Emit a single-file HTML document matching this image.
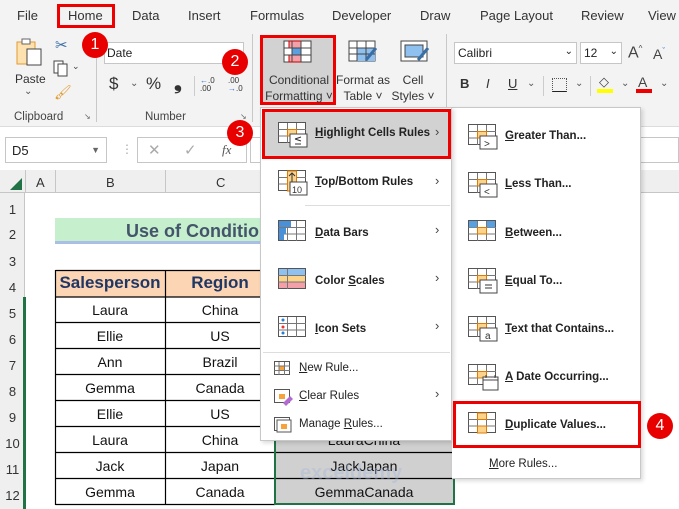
<!DOCTYPE html>
<html><head><meta charset="utf-8"><style>
*{margin:0;padding:0;box-sizing:border-box}
body{width:679px;height:509px;overflow:hidden;position:relative;background:#fff;font-family:"Liberation Sans",sans-serif;color:#222}
.a{position:absolute}
.t{font-size:13px;color:#333;top:8px}
.badge{position:absolute;width:26px;height:26px;border-radius:50%;background:#e80000;color:#fff;font-size:16px;text-align:center;line-height:26px}
.rl{font-size:11.5px;color:#444;top:111px}
.cell{position:absolute;font-size:14px;text-align:center;color:#111}
.rh{position:absolute;left:0;width:25px;font-size:13px;color:#333;text-align:center}
.mi{position:absolute;font-size:11.5px;font-weight:bold;color:#222;white-space:nowrap}
.mi u{text-decoration:underline}
.chev{position:absolute;font-size:13px;color:#444}
</style></head><body>
<div class="a" style="left:0;top:0;width:679px;height:127px;background:#f3f3f3;border-bottom:1px solid #dcdcdc"></div>
<div class="a t" style="left:17px">File</div>
<div class="a t" style="left:68px">Home</div>
<div class="a" style="left:57px;top:4px;width:58px;height:24px;border:3px solid #e00"></div>
<div class="a t" style="left:132px">Data</div>
<div class="a t" style="left:188px">Insert</div>
<div class="a t" style="left:250px">Formulas</div>
<div class="a t" style="left:332px">Developer</div>
<div class="a t" style="left:420px">Draw</div>
<div class="a t" style="left:480px">Page Layout</div>
<div class="a t" style="left:581px">Review</div>
<div class="a t" style="left:648px">View</div>
<svg class="a" style="left:15px;top:36px" width="32" height="30"><rect x="2" y="6" width="18" height="22" fill="#fde2b0" stroke="#e29a2f"/><rect x="7" y="3" width="8" height="5" fill="#fff" stroke="#666"/><rect x="12" y="13" width="14" height="16" fill="#fff" stroke="#444"/></svg>
<div class="a" style="left:15px;top:72px;font-size:12px;color:#333">Paste</div>
<div class="a" style="left:24px;top:86px;font-size:10px;color:#555">⌄</div>
<div class="a" style="left:55px;top:36px;font-size:15px;color:#3a6ea5">✂</div>
<svg class="a" style="left:53px;top:60px" width="28" height="18"><rect x="1" y="1" width="9" height="12" fill="#fff" stroke="#444"/><rect x="5" y="4" width="9" height="12" fill="#fff" stroke="#444"/><text x="19" y="9" font-size="9" fill="#444">⌄</text></svg>
<div class="a" style="left:54px;top:84px;font-size:14px;color:#e29a2f">🖌</div>
<div class="a rl" style="left:14px">Clipboard</div>
<div class="a" style="left:84px;top:112px;font-size:8px;color:#666">↘</div>
<div class="a" style="left:96px;top:34px;width:1px;height:88px;background:#c8c8c8"></div>
<div class="a" style="left:104px;top:42px;width:140px;height:22px;background:#fff;border:1px solid #c6c6c6;font-size:12px;padding:3px 2px;color:#222">Date</div>
<div class="a" style="left:109px;top:74px;font-size:17px;color:#333">$</div>
<div class="a" style="left:130px;top:78px;font-size:10px;color:#555">⌄</div>
<div class="a" style="left:146px;top:74px;font-size:17px;color:#333">%</div>
<div class="a" style="left:174px;top:72px;font-size:20px;font-weight:bold;color:#333">❟</div>
<div class="a" style="left:194px;top:76px;width:1px;height:20px;background:#ccc"></div>
<div class="a" style="left:200px;top:77px;font-size:8px;line-height:8px;color:#333"><span style="color:#2a7bd3">←</span>.0<br>.00</div>
<div class="a" style="left:228px;top:77px;font-size:8px;line-height:8px;color:#333">.00<br><span style="color:#2a7bd3">→</span>.0</div>
<div class="a rl" style="left:145px">Number</div>
<div class="a" style="left:240px;top:112px;font-size:8px;color:#666">↘</div>
<div class="a" style="left:252px;top:34px;width:1px;height:88px;background:#c8c8c8"></div>
<div class="a" style="left:260px;top:35px;width:76px;height:70px;background:#d2d2d2;border:3px solid #e00"></div>
<svg class="a" style="left:283px;top:40px" width="30" height="24"><rect x="1" y="1" width="27" height="21" fill="#fff" stroke="#444"/><rect x="6" y="1" width="12" height="7" fill="#f4a0a8" stroke="#c00"/><rect x="9" y="8" width="9" height="7" fill="#5aa0e0"/><rect x="6" y="15" width="12" height="7" fill="#f4a0a8" stroke="#c00"/><path d="M1 8H28M1 15H28M9 1V22M18 1V22" stroke="#444" fill="none"/></svg>
<div class="a" style="left:263px;top:72px;font-size:12px;color:#333;width:72px;text-align:center;line-height:16px">Conditional<br>Formatting ˅</div>
<svg class="a" style="left:348px;top:40px" width="30" height="26"><rect x="1" y="1" width="26" height="20" fill="#fff" stroke="#444"/><rect x="9" y="8" width="18" height="13" fill="#8ec1f0"/><path d="M1 8H27M1 14H27M9 1V21M18 1V21" stroke="#444" fill="none"/><path d="M28 8L18 20" stroke="#3a6ea5" stroke-width="3"/></svg>
<div class="a" style="left:336px;top:72px;font-size:12px;color:#333;width:54px;text-align:center;line-height:16px">Format as<br>Table ˅</div>
<svg class="a" style="left:400px;top:40px" width="30" height="26"><rect x="1" y="1" width="26" height="20" fill="#fff" stroke="#444"/><rect x="5" y="5" width="18" height="12" fill="#8ec1f0" stroke="#444"/><path d="M28 8L18 20" stroke="#3a6ea5" stroke-width="3"/></svg>
<div class="a" style="left:390px;top:72px;font-size:12px;color:#333;width:46px;text-align:center;line-height:16px">Cell<br>Styles ˅</div>
<div class="a" style="left:446px;top:34px;width:1px;height:88px;background:#c8c8c8"></div>
<div class="a" style="left:454px;top:42px;width:123px;height:22px;background:#fff;border:1px solid #c6c6c6;font-size:12px;padding:3px 3px;color:#222">Calibri<span style="float:right;font-size:10px">⌄</span></div>
<div class="a" style="left:580px;top:42px;width:42px;height:22px;background:#fff;border:1px solid #c6c6c6;font-size:12px;padding:3px 3px;color:#222">12<span style="float:right;font-size:10px">⌄</span></div>
<div class="a" style="left:628px;top:44px;font-size:16px;color:#444">A<sup style="font-size:8px">^</sup></div>
<div class="a" style="left:653px;top:46px;font-size:14px;color:#444">A<sup style="font-size:8px;color:#2a7bd3">ˇ</sup></div>
<div class="a" style="left:460px;top:76px;font-size:13px;font-weight:bold;color:#333">B</div>
<div class="a" style="left:486px;top:76px;font-size:13px;font-style:italic;color:#333">I</div>
<div class="a" style="left:508px;top:76px;font-size:13px;text-decoration:underline;color:#333">U</div>
<div class="a" style="left:527px;top:78px;font-size:10px;color:#555">⌄</div>
<div class="a" style="left:543px;top:76px;width:1px;height:20px;background:#ccc"></div>
<div class="a" style="left:552px;top:78px;width:15px;height:14px;border:1px dotted #555;border-bottom:1px solid #222"></div>
<div class="a" style="left:575px;top:78px;font-size:10px;color:#555">⌄</div>
<div class="a" style="left:590px;top:76px;width:1px;height:20px;background:#ccc"></div>
<div class="a" style="left:599px;top:74px;font-size:13px;color:#444">◇</div>
<div class="a" style="left:597px;top:89px;width:16px;height:4px;background:#ff0"></div>
<div class="a" style="left:621px;top:78px;font-size:10px;color:#555">⌄</div>
<div class="a" style="left:638px;top:74px;font-size:14px;color:#444">A</div>
<div class="a" style="left:636px;top:89px;width:16px;height:4px;background:#e00"></div>
<div class="a" style="left:660px;top:78px;font-size:10px;color:#555">⌄</div>
<div class="a" style="left:5px;top:137px;width:102px;height:26px;border:1px solid #c6c6c6;font-size:13px;padding:5px 6px;color:#222">D5<span style="float:right;font-size:9px;color:#666;margin-top:2px">▼</span></div>
<div class="a" style="left:121px;top:142px;font-size:12px;color:#aaa">⋮</div>
<div class="a" style="left:137px;top:137px;width:110px;height:26px;border:1px solid #c6c6c6"></div>
<div class="a" style="left:148px;top:141px;font-size:15px;color:#aaa">✕</div>
<div class="a" style="left:184px;top:141px;font-size:15px;color:#aaa">✓</div>
<div class="a" style="left:222px;top:142px;font-size:13px;font-style:italic;color:#555;font-family:'Liberation Serif',serif">fx</div>
<div class="a" style="left:250px;top:137px;width:429px;height:26px;border:1px solid #c6c6c6"></div>
<div class="a" style="left:0;top:170px;width:679px;height:23px;background:#efefef;border-bottom:1px solid #c6c6c6"></div>
<svg class="a" style="left:10px;top:178px" width="13" height="13"><path d="M12 0V12H0Z" fill="#217346"/></svg>
<div class="a" style="left:25px;top:170px;width:1px;height:23px;background:#c6c6c6"></div>
<div class="a" style="left:55px;top:170px;width:1px;height:23px;background:#c6c6c6"></div>
<div class="a" style="left:165px;top:170px;width:1px;height:23px;background:#c6c6c6"></div>
<div class="a" style="left:36px;top:175px;font-size:13px;color:#333">A</div>
<div class="a" style="left:106px;top:175px;font-size:13px;color:#333">B</div>
<div class="a" style="left:216px;top:175px;font-size:13px;color:#333">C</div>
<div class="a" style="left:0;top:193px;width:25px;height:316px;background:#efefef;border-right:1px solid #c6c6c6"></div>
<div class="a" style="left:23px;top:297px;width:3px;height:212px;background:#217346"></div>
<div class="rh" style="top:202px">1</div><div class="rh" style="top:227px">2</div><div class="rh" style="top:254px">3</div><div class="rh" style="top:280px">4</div><div class="rh" style="top:306px">5</div><div class="rh" style="top:332px">6</div><div class="rh" style="top:358px">7</div><div class="rh" style="top:384px">8</div><div class="rh" style="top:410px">9</div><div class="rh" style="top:436px">10</div><div class="rh" style="top:462px">11</div><div class="rh" style="top:488px">12</div>
<div class="a" style="left:55px;top:218px;width:220px;height:26px;background:#c6efce;border-bottom:3px solid #a9bfe6"></div>
<div class="a" style="left:126px;top:221px;font-size:18px;font-weight:bold;color:#44546a">Use of Conditio</div>
<div class="a" style="left:55px;top:270px;width:220px;height:27px;background:#fcd5b4"></div>
<div class="a" style="left:274px;top:297px;width:180px;height:208px;background:#fff"></div>
<div class="a" style="left:274px;top:426px;width:180px;height:78px;background:#d0d0d0"></div>
<svg class="a" style="left:0;top:0" width="679" height="509"><g stroke="#000" stroke-width="1.2"><path d="M55.5 270.5H275M55.5 297H275M55.5 322.5H275M55.5 348.5H275M55.5 374.5H275M55.5 400.5H275M55.5 426.5H275M55.5 452.5H275M55.5 478.5H275M55.5 504.5H275M55.5 270V505M165.5 270V505M275 452.5H454M275 478.5H454"/></g></svg>
<div class="a" style="left:274px;top:297px;width:181px;height:208px;border:2px solid #217346"></div>
<div class="cell" style="left:55px;top:273px;width:110px;font-size:17px;font-weight:bold;color:#203764">Salesperson</div>
<div class="cell" style="left:165px;top:273px;width:110px;font-size:17px;font-weight:bold;color:#203764">Region</div>
<div class="cell" style="left:55px;top:302px;width:110px">Laura</div><div class="cell" style="left:165px;top:302px;width:110px">China</div>
<div class="cell" style="left:55px;top:328px;width:110px">Ellie</div><div class="cell" style="left:165px;top:328px;width:110px">US</div>
<div class="cell" style="left:55px;top:354px;width:110px">Ann</div><div class="cell" style="left:165px;top:354px;width:110px">Brazil</div>
<div class="cell" style="left:55px;top:380px;width:110px">Gemma</div><div class="cell" style="left:165px;top:380px;width:110px">Canada</div>
<div class="cell" style="left:55px;top:406px;width:110px">Ellie</div><div class="cell" style="left:165px;top:406px;width:110px">US</div>
<div class="cell" style="left:55px;top:432px;width:110px">Laura</div><div class="cell" style="left:165px;top:432px;width:110px">China</div>
<div class="cell" style="left:55px;top:458px;width:110px">Jack</div><div class="cell" style="left:165px;top:458px;width:110px">Japan</div>
<div class="cell" style="left:55px;top:484px;width:110px">Gemma</div><div class="cell" style="left:165px;top:484px;width:110px">Canada</div>
<div class="cell" style="left:274px;top:432px;width:180px">LauraChina</div>
<div class="cell" style="left:274px;top:458px;width:180px">JackJapan</div>
<div class="cell" style="left:274px;top:484px;width:180px">GemmaCanada</div>
<div class="a" style="left:300px;top:462px;font-size:20px;font-weight:bold;color:#a8b8d8;opacity:.4">exceldemy</div>
<!-- submenu bg -->
<div class="a" style="left:452px;top:107px;width:189px;height:372px;background:#fff;border:1px solid #c8c8c8;border-left:none;box-shadow:2px 2px 4px rgba(0,0,0,.15)"></div>
<!-- menu 1 -->
<div class="a" style="left:260px;top:107px;width:192px;height:334px;background:#fff;border:1px solid #c8c8c8;box-shadow:2px 2px 4px rgba(0,0,0,.15)"></div>
<div class="a" style="left:262px;top:109px;width:189px;height:50px;background:#d2d2d2;border:3px solid #e00"></div>
<div class="a" style="left:305px;top:205px;width:145px;height:1px;background:#ddd"></div>
<div class="a" style="left:263px;top:352px;width:187px;height:1px;background:#ddd"></div>
<svg class="a" style="left:0;top:0" width="679" height="509" fill="none">
<defs><g id="g"><rect x=".5" y=".5" width="27" height="20" fill="#fff" stroke="#555"/><path d="M.5 7.5H28M.5 14H28M9.5 1V21M18.5 1V21" stroke="#777"/></g></defs>
<g transform="translate(278,122)"><use href="#g"/><rect x="9.5" y="7.5" width="9" height="6.5" fill="#fbd38b" stroke="#e07b00"/><rect x="12" y="12" width="17" height="13" fill="#fff" stroke="#444"/><path d="M17 17L23 15M17 17L23 19M17 22H23" stroke="#333"/></g>
<g transform="translate(278,170)"><use href="#g"/><rect x="9.5" y="1" width="9" height="20" fill="#fbd38b" stroke="#e07b00"/><path d="M14 12V3M11 6L14 3L17 6" stroke="#333"/><rect x="12" y="12" width="17" height="13" fill="#fff" stroke="#444"/><text x="14" y="23" font-size="9" fill="#333">10</text></g>
<g transform="translate(278,220)"><use href="#g"/><rect x="1" y="1" width="12" height="6" fill="#4a90d9"/><rect x="1" y="8" width="7" height="6" fill="#4a90d9"/><rect x="1" y="14" width="5" height="6" fill="#4a90d9"/></g>
<g transform="translate(278,268)"><rect x=".5" y=".5" width="27" height="20" fill="#fff" stroke="#555"/><rect x="1" y="1" width="26" height="6" fill="#8ec1f0"/><rect x="1" y="8" width="26" height="6" fill="#fbd38b"/><rect x="1" y="14" width="26" height="6" fill="#f4a0a8"/><path d="M.5 7.5H28M.5 14H28M9.5 1V21" stroke="#777"/></g>
<g transform="translate(278,316)"><use href="#g"/><circle cx="5" cy="4" r="1.5" fill="#2a7bd3"/><circle cx="5" cy="11" r="1.5" fill="#e33"/><circle cx="5" cy="17" r="1.5" fill="#2a7bd3"/></g>
<g transform="translate(274,361)"><rect x=".5" y=".5" width="15" height="13" fill="#fff" stroke="#555"/><rect x="5" y="5" width="6" height="5" fill="#f7a23b"/><path d="M.5 5H16M.5 9.5H16M5 1V14M10.5 1V14" stroke="#777"/></g>
<g transform="translate(274,389)"><rect x=".5" y=".5" width="15" height="13" fill="#fff" stroke="#555"/><rect x="5" y="5" width="6" height="5" fill="#f7a23b"/><path d="M9 14L16 7L19 10L12 17Z" fill="#b36ad1"/></g>
<g transform="translate(274,417)"><rect x=".5" y=".5" width="15" height="13" fill="#fff" stroke="#555"/><rect x="3" y="3" width="14" height="12" fill="#fff" stroke="#555"/><rect x="7" y="7" width="6" height="5" fill="#f7a23b"/></g>
<g transform="translate(468,124)"><use href="#g"/><rect x="9.5" y="7.5" width="9" height="6.5" fill="#fbd38b" stroke="#e07b00"/><rect x="12" y="12" width="17" height="13" fill="#fff" stroke="#444"/><text x="16" y="23" font-size="10" fill="#333">&gt;</text></g>
<g transform="translate(468,172)"><use href="#g"/><rect x="9.5" y="7.5" width="9" height="6.5" fill="#fbd38b" stroke="#e07b00"/><rect x="12" y="12" width="17" height="13" fill="#fff" stroke="#444"/><text x="16" y="23" font-size="10" fill="#333">&lt;</text></g>
<g transform="translate(468,220)"><use href="#g"/><rect x="1" y="1" width="8" height="6.5" fill="#5aa0e0"/><rect x="19" y="1" width="8" height="6.5" fill="#5aa0e0"/><rect x="9.5" y="7.5" width="9" height="6.5" fill="#fbd38b" stroke="#e07b00"/></g>
<g transform="translate(468,268)"><use href="#g"/><rect x="9.5" y="7.5" width="9" height="6.5" fill="#fbd38b" stroke="#e07b00"/><rect x="12" y="12" width="17" height="13" fill="#fff" stroke="#444"/><path d="M17 17H24M17 20H24" stroke="#333"/></g>
<g transform="translate(468,316)"><use href="#g"/><rect x="9.5" y="7.5" width="9" height="6.5" fill="#fbd38b" stroke="#e07b00"/><rect x="12" y="12" width="17" height="13" fill="#fff" stroke="#444"/><text x="17" y="23" font-size="10" fill="#333">a</text></g>
<g transform="translate(468,364)"><use href="#g"/><rect x="9.5" y="7.5" width="9" height="6.5" fill="#fbd38b" stroke="#e07b00"/><rect x="15" y="13" width="15" height="13" fill="#fff" stroke="#444"/><path d="M15 16H30M18 11V14M27 11V14" stroke="#444"/></g>
<g transform="translate(468,412)"><use href="#g"/><rect x="9.5" y="1" width="9" height="6.5" fill="#fbd38b" stroke="#e07b00"/><rect x="9.5" y="14" width="9" height="7" fill="#fbd38b" stroke="#e07b00"/></g>
</svg>
<div class="mi" style="left:315px;top:127px"><u>H</u>ighlight Cells Rules</div>
<div class="mi" style="left:315px;top:176px"><u>T</u>op/Bottom Rules</div>
<div class="mi" style="left:315px;top:227px"><u>D</u>ata Bars</div>
<div class="mi" style="left:315px;top:275px">Color <u>S</u>cales</div>
<div class="mi" style="left:315px;top:323px"><u>I</u>con Sets</div>
<div class="mi" style="left:299px;top:362px;font-weight:normal"><u>N</u>ew Rule...</div>
<div class="mi" style="left:299px;top:390px;font-weight:normal"><u>C</u>lear Rules</div>
<div class="mi" style="left:299px;top:418px;font-weight:normal">Manage <u>R</u>ules...</div>
<div class="chev" style="left:435px;top:124px">›</div>
<div class="chev" style="left:435px;top:173px">›</div>
<div class="chev" style="left:435px;top:222px">›</div>
<div class="chev" style="left:435px;top:270px">›</div>
<div class="chev" style="left:435px;top:318px">›</div>
<div class="chev" style="left:435px;top:386px">›</div>
<div class="mi" style="left:505px;top:130px"><u>G</u>reater Than...</div>
<div class="mi" style="left:505px;top:178px"><u>L</u>ess Than...</div>
<div class="mi" style="left:505px;top:227px"><u>B</u>etween...</div>
<div class="mi" style="left:505px;top:275px"><u>E</u>qual To...</div>
<div class="mi" style="left:505px;top:323px"><u>T</u>ext that Contains...</div>
<div class="mi" style="left:505px;top:371px"><u>A</u> Date Occurring...</div>
<div class="mi" style="left:505px;top:419px"><u>D</u>uplicate Values...</div>
<div class="mi" style="left:489px;top:458px;font-weight:normal"><u>M</u>ore Rules...</div>
<div class="a" style="left:453px;top:401px;width:188px;height:47px;border:3px solid #e00"></div>
<div class="badge" style="left:82px;top:32px">1</div>
<div class="badge" style="left:222px;top:49px">2</div>
<div class="badge" style="left:227px;top:120px">3</div>
<div class="badge" style="left:647px;top:413px">4</div>
</body></html>
